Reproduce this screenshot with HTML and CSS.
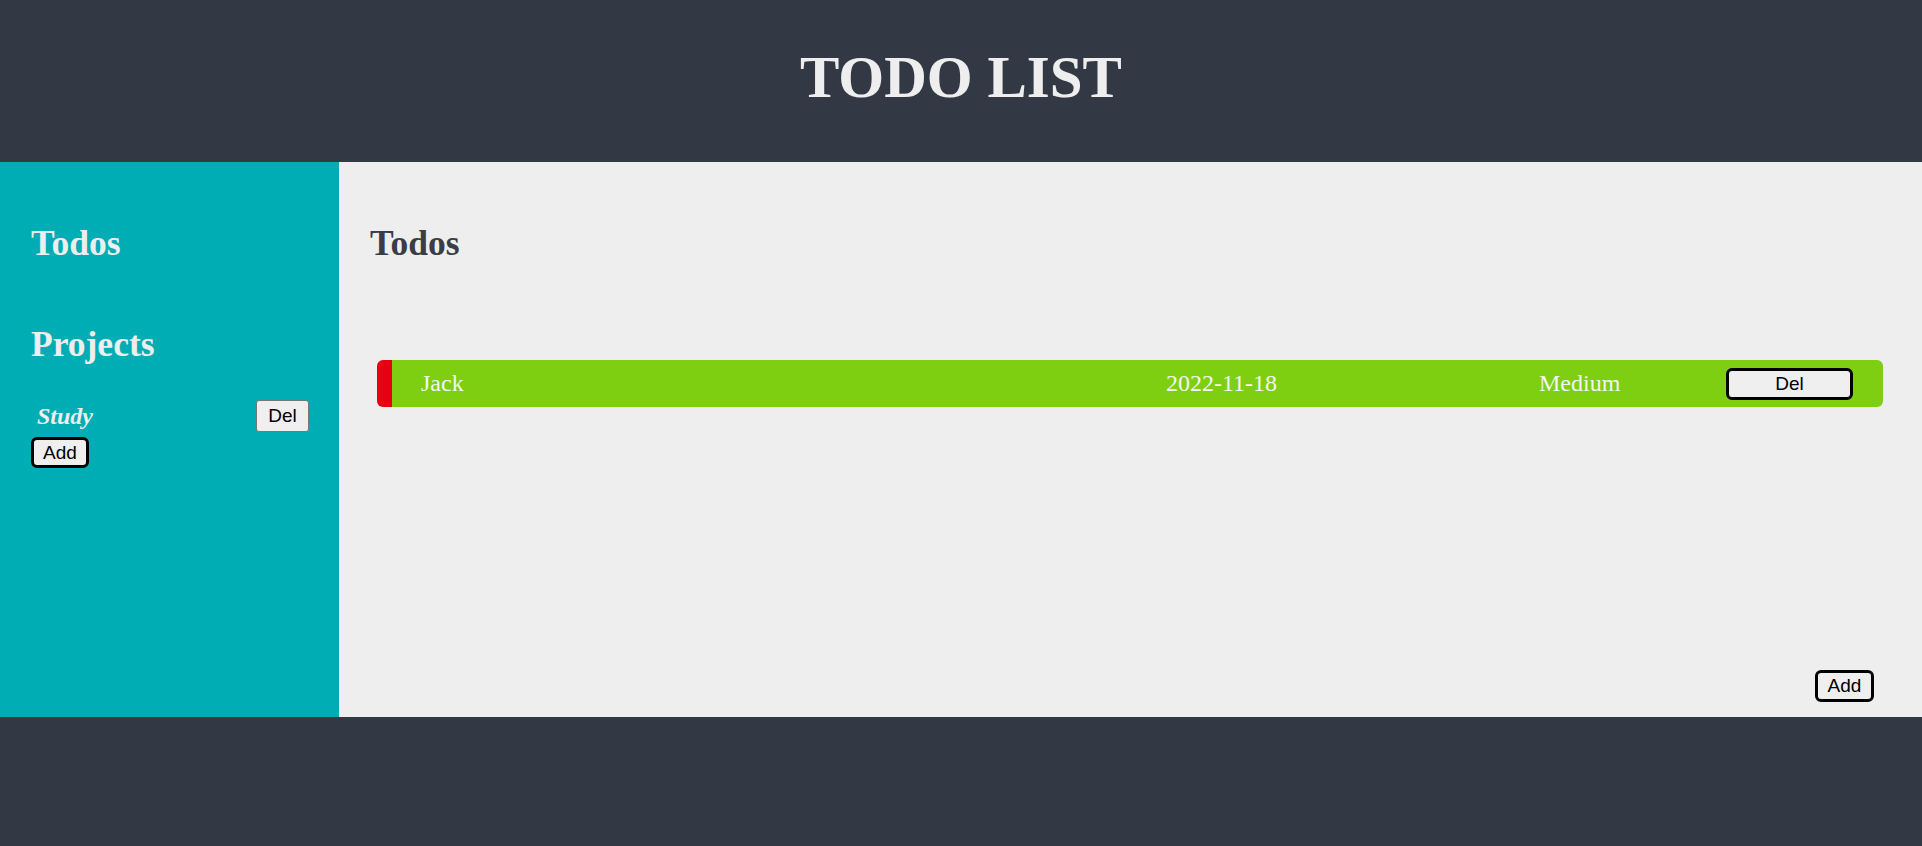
FILE: index.html
```html
<!DOCTYPE html>
<html lang="en">
<head>
<meta charset="utf-8">
<title>TODO LIST</title>
<link rel="stylesheet" href="styles.css">
</head>
<body>
<div class="page">
  <header class="header">
    <h1 class="title">TODO LIST</h1>
  </header>
  <div class="content">
    <aside class="sidebar">
      <h2 class="side-heading">Todos</h2>
      <h2 class="side-heading projects-heading">Projects</h2>
      <div class="project-row">
        <span class="project-name">Study</span>
        <button class="btn btn-default">Del</button>
      </div>
      <button class="btn btn-bold side-add">Add</button>
    </aside>
    <main class="main">
      <h2 class="main-heading">Todos</h2>
      <div class="todo">
        <span class="todo-title">Jack</span>
        <span class="todo-date">2022-11-18</span>
        <span class="todo-priority">Medium</span>
        <button class="btn btn-bold todo-del">Del</button>
      </div>
      <button class="btn btn-bold main-add">Add</button>
    </main>
  </div>
  <footer class="footer"></footer>
</div>
</body>
</html>
```
FILE: styles.css
```css
* { box-sizing: border-box; }
html, body { margin: 0; padding: 0; }
body {
  font-family: "Liberation Serif", "Times New Roman", serif;
  background: #323844;
}
.page {
  display: grid;
  grid-template-rows: 162px 555px 1fr;
  height: 100vh;
}
.header {
  background: #323844;
  padding-top: 47px;
}
.title {
  margin: 0;
  text-align: center;
  font-size: 59px;
  line-height: 60px;
  font-weight: bold;
  color: #eeeeee;
}
.content {
  display: grid;
  grid-template-columns: 339px 1fr;
}
.sidebar {
  background: #00adb5;
  padding: 61px 30px 0 31px;
  display: flex;
  flex-direction: column;
  align-items: flex-start;
}
.side-heading {
  margin: 0;
  font-size: 35.5px;
  line-height: 40px;
  font-weight: bold;
  color: #eeeeee;
}
.projects-heading { margin-top: 61px; }
.project-row {
  margin-top: 36px;
  width: 100%;
  height: 32px;
  display: flex;
  align-items: center;
  justify-content: space-between;
}
.project-name {
  padding-left: 6px;
  font-size: 24px;
  line-height: 28px;
  font-weight: bold;
  font-style: italic;
  color: #eeeeee;
}
.btn {
  font-family: "Liberation Sans", Arial, sans-serif;
  font-size: 19px;
  color: #000;
  background: #efefef;
  display: inline-flex;
  align-items: center;
  justify-content: center;
  padding: 0;
  cursor: pointer;
}
.btn-default {
  width: 53px;
  height: 32px;
  border: 1px solid #767676;
  border-radius: 3px;
}
.btn-bold {
  border: 3px solid #000;
  border-radius: 6px;
}
.side-add {
  margin-top: 5px;
  width: 58px;
  height: 31px;
}
.main {
  background: #eeeeee;
  padding: 61px 48px 15px 31px;
  display: flex;
  flex-direction: column;
}
.main-heading {
  margin: 0;
  font-size: 35.5px;
  line-height: 40px;
  font-weight: bold;
  color: #393e46;
}
.todo {
  margin: 97px -9px 0 7px;
  height: 47px;
  background: #7ecf12;
  border-left: 15px solid #e60012;
  border-radius: 6px;
  padding-left: 29px;
  display: grid;
  grid-template-columns: 745px 373px 187px 127px;
  align-items: center;
  color: #f4f4f4;
  font-size: 24px;
}
.todo-del {
  width: 127px;
  height: 32px;
}
.main-add {
  margin-top: auto;
  align-self: flex-end;
  width: 59px;
  height: 32px;
}
.footer {
  background: #323844;
}
```
